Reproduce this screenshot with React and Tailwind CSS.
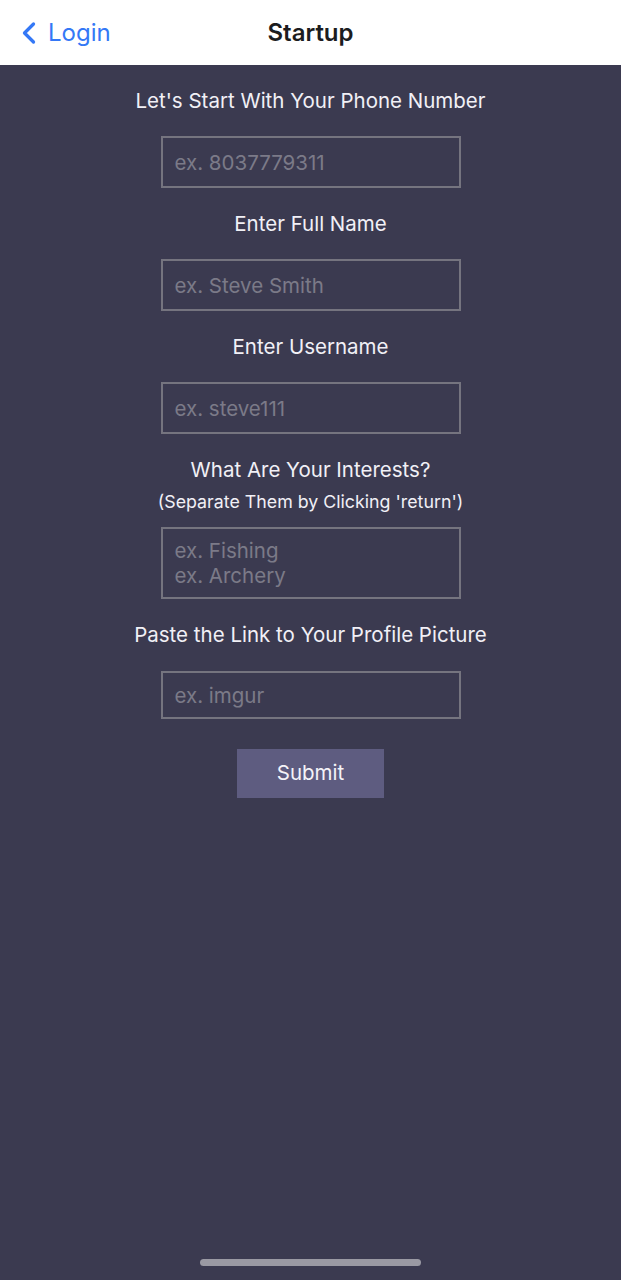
import { ChevronLeft } from "lucide-react";

const font = { fontFamily: "Inter, 'Noto Sans', sans-serif" };

function Field({ placeholder, className = "" }) {
  return (
    <div
      className={`mx-auto flex w-[300px] items-center border-2 border-[#75747f] px-[12px] text-[20.5px] leading-[25px] text-[#7b7a88] ${className}`}
    >
      {placeholder}
    </div>
  );
}

function Label({ children, className = "" }) {
  return <p className={`text-center text-[20.5px] leading-[24px] text-[#f1f0f6] ${className}`}>{children}</p>;
}

export default function App() {
  return (
    <div className="flex min-h-[1280px] flex-col bg-[#3b3a50]" style={font}>
      {/* Nav bar */}
      <header className="relative flex h-[65px] items-center justify-center bg-white">
        <button className="absolute left-[11px] top-[15px] flex items-center text-[#3478f6]">
          <ChevronLeft size={36} strokeWidth={2.2} />
          <span className="ml-[1px] text-[24px] leading-[34px]">Login</span>
        </button>
        <h1 className="text-[24px] font-semibold text-[#1c1c1e]">Startup</h1>
      </header>

      <main className="flex flex-1 flex-col pt-[24px]">
        <Label>Let's Start With Your Phone Number</Label>
        <Field placeholder="ex. 8037779311" className="mt-[23px] h-[52px]" />

        <Label className="mt-[24px]">Enter Full Name</Label>
        <Field placeholder="ex. Steve Smith" className="mt-[23px] h-[52px]" />

        <Label className="mt-[24px]">Enter Username</Label>
        <Field placeholder="ex. steve111" className="mt-[23px] h-[52px]" />

        <Label className="mt-[24px]">What Are Your Interests?</Label>
        <p className="mt-[10px] text-center text-[17.8px] leading-[20px] text-[#f1f0f6]">
          (Separate Them by Clicking 'return')
        </p>
        <div className="mx-auto mt-[15px] flex h-[72px] w-[300px] flex-col justify-center border-2 border-[#75747f] px-[12px] text-[20.5px] leading-[25px] text-[#7b7a88]">
          <span>ex. Fishing</span>
          <span>ex. Archery</span>
        </div>

        <Label className="mt-[24px]">Paste the Link to Your Profile Picture</Label>
        <Field placeholder="ex. imgur" className="mt-[24px] h-[48px]" />

        <button className="mx-auto mt-[30px] h-[49px] w-[147px] bg-[#5e5c80] text-[20.5px] text-[#f4f3f8]">
          Submit
        </button>
      </main>

      <div className="flex justify-center pb-[14px]">
        <div className="h-[7px] w-[221px] rounded-full bg-[#9a99a3]" />
      </div>
    </div>
  );
}
